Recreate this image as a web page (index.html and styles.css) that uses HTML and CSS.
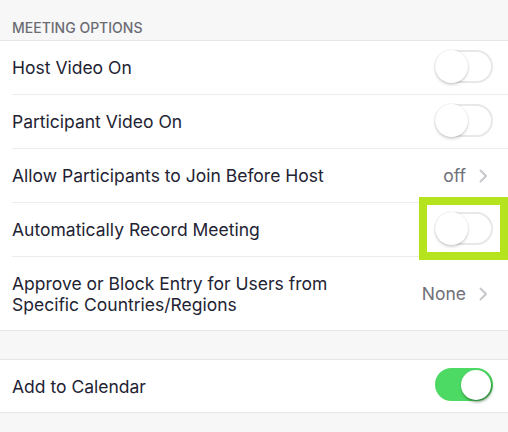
FILE: index.html
```html
<!DOCTYPE html>
<html>
<head>
<meta charset="utf-8">
<link rel="stylesheet" href="styles.css">
</head>
<body>
<div class="page">
  <div class="section-header">MEETING OPTIONS</div>
  <div class="group">
    <div class="row">
      <div class="label">Host Video On</div>
      <div class="toggle"><span class="knob"></span></div>
    </div>
    <div class="row">
      <div class="label">Participant Video On</div>
      <div class="toggle"><span class="knob"></span></div>
    </div>
    <div class="row">
      <div class="label">Allow Participants to Join Before Host</div>
      <div class="value">off<span class="chev"><svg width="9" height="14" viewBox="0 0 9 14"><path d="M1.5 1.5 L7 7 L1.5 12.5" fill="none" stroke="#c7c7cc" stroke-width="2" stroke-linecap="round" stroke-linejoin="round"/></svg></span></div>
    </div>
    <div class="row highlighted">
      <div class="label">Automatically Record Meeting</div>
      <div class="toggle"><span class="knob"></span></div>
      <div class="highlight"></div>
    </div>
    <div class="row tall last">
      <div class="label">Approve or Block Entry for Users from<br>Specific Countries/Regions</div>
      <div class="value">None<span class="chev"><svg width="9" height="14" viewBox="0 0 9 14"><path d="M1.5 1.5 L7 7 L1.5 12.5" fill="none" stroke="#c7c7cc" stroke-width="2" stroke-linecap="round" stroke-linejoin="round"/></svg></span></div>
    </div>
  </div>
  <div class="spacer"></div>
  <div class="group">
    <div class="row short last">
      <div class="label">Add to Calendar</div>
      <div class="toggle on"><span class="knob"></span></div>
    </div>
  </div>
</div>
</body>
</html>
```

FILE: styles.css
```css
html, body {
  margin: 0;
  padding: 0;
  background: #f7f7f7;
}
.page {
  width: 508px;
  height: 432px;
  overflow: hidden;
  font-family: Inter, Roboto, "Liberation Sans", sans-serif;
  color: #232333;
  background: #f7f7f7;
}
.section-header {
  height: 41px;
  box-sizing: border-box;
  padding: 19px 0 0 12px;
  font-size: 14px;
  font-weight: 500;
  color: #6c6c74;
  border-bottom: 1px solid #e6e6e6;
}
.group {
  background: #fff;
}
.row {
  position: relative;
  display: flex;
  align-items: center;
  justify-content: space-between;
  height: 53px;
  padding: 0 15px 0 12px;
  font-size: 17.5px;
}
.row::after {
  content: "";
  position: absolute;
  left: 12px;
  right: 0;
  bottom: -1px;
  height: 1px;
  background: #ececec;
  z-index: 1;
}
.row + .row {
  margin-top: 1px;
}
.row.last::after {
  left: 0;
  background: #e6e6e6;
}
.row.tall {
  height: 73px;
  line-height: 21px;
}
.row.short {
  height: 52px;
}
.label {
  white-space: nowrap;
}
.value {
  display: flex;
  align-items: center;
  color: #707078;
  padding-right: 5px;
}
.chev {
  display: flex;
  margin-left: 13px;
}
.toggle {
  position: relative;
  width: 58px;
  height: 33px;
  box-sizing: border-box;
  border: 2px solid #e8e8e8;
  border-radius: 17px;
  background: #fff;
  margin-top: -3px;
}
.toggle .knob {
  position: absolute;
  left: -2px;
  top: -2px;
  width: 33px;
  height: 33px;
  border-radius: 50%;
  background: #fff;
  box-shadow: 0 2px 3px rgba(0,0,0,0.16), 0 0 0 1px rgba(0,0,0,0.04);
}
.toggle.on {
  background: #4cd964;
  border-color: #4cd964;
}
.toggle.on .knob {
  left: auto;
  right: 0px;
  top: 0px;
  width: 30px;
  height: 30px;
  box-shadow: 1px 2px 3px rgba(20,60,20,0.55);
}
.highlight {
  position: absolute;
  right: 0;
  top: -6px;
  width: 89px;
  height: 63px;
  box-sizing: border-box;
  border: 8px solid #b5e41e;
  z-index: 2;
}
.spacer {
  height: 28px;
  border-bottom: 1px solid #e6e6e6;
  margin-top: 1px;
}
```
